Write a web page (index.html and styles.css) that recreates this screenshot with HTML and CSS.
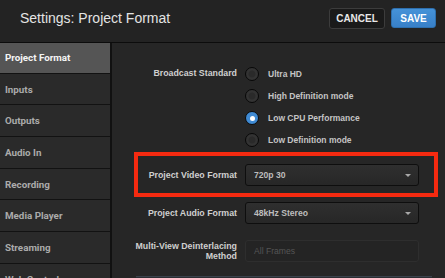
FILE: index.html
```html
<!DOCTYPE html>
<html>
<head>
<meta charset="utf-8">
<link rel="stylesheet" href="styles.css">
</head>
<body>
<div class="app">
  <header class="header">
    <h1 class="title">Settings: Project Format</h1>
    <div class="actions">
      <button class="btn btn-cancel">CANCEL</button>
      <button class="btn btn-save">SAVE</button>
    </div>
  </header>
  <div class="main">
    <nav class="sidebar">
      <div class="nav-item active">Project Format</div>
      <div class="nav-item">Inputs</div>
      <div class="nav-item">Outputs</div>
      <div class="nav-item">Audio In</div>
      <div class="nav-item">Recording</div>
      <div class="nav-item">Media Player</div>
      <div class="nav-item">Streaming</div>
      <div class="nav-item">Web Control</div>
    </nav>
    <section class="content">
      <div class="row row-radios">
        <div class="label">Broadcast Standard</div>
        <div class="radios">
          <div class="radio"><span class="dot"></span><span>Ultra HD</span></div>
          <div class="radio"><span class="dot"></span><span>High Definition mode</span></div>
          <div class="radio"><span class="dot checked"></span><span>Low CPU Performance</span></div>
          <div class="radio"><span class="dot"></span><span>Low Definition mode</span></div>
        </div>
      </div>
      <div class="row row-highlight">
        <div class="label">Project Video Format</div>
        <div class="select"><span>720p 30</span><span class="caret"></span></div>
      </div>
      <div class="row">
        <div class="label">Project Audio Format</div>
        <div class="select"><span>48kHz Stereo</span><span class="caret"></span></div>
      </div>
      <div class="row">
        <div class="label label-two">Multi-View Deinterlacing<br>Method</div>
        <div class="select disabled"><span>All Frames</span></div>
      </div>
      <div class="panel-edge"></div>
    </section>
  </div>
</div>
</body>
</html>
```

FILE: styles.css
```css
* { box-sizing: border-box; }
html, body { margin: 0; padding: 0; }
body {
  width: 445px;
  height: 278px;
  overflow: hidden;
  background: #262626;
  font-family: "Liberation Sans", Arial, sans-serif;
}
.app { display: flex; flex-direction: column; height: 278px; overflow: hidden; }

.header {
  height: 43px;
  flex: none;
  background: #232323;
  border-bottom: 1px solid #0c0c0c;
  display: flex;
  justify-content: space-between;
  align-items: flex-start;
  padding: 8px 9px 0 20px;
}
.title {
  margin: 0;
  font-weight: normal;
  font-size: 14px;
  line-height: 20px;
  color: #e4e4e4;
}
.actions { display: flex; gap: 6px; }
.btn {
  font-family: "Liberation Sans", Arial, sans-serif;
  font-weight: bold;
  font-size: 10px;
  color: #e8e8e8;
  border-radius: 3px;
  padding: 0;
  height: 21px;
  cursor: pointer;
}
.btn-cancel {
  width: 56px;
  background: #1a1a1a;
  border: 1px solid #3c3c3c;
}
.btn-save {
  width: 45px;
  height: 20px;
  background: linear-gradient(#4592d8, #3880c8);
  border: 1px solid #2d6fae;
  color: #fff;
}

.main { display: flex; flex: 1; min-height: 0; overflow: hidden; }
.sidebar {
  width: 112px;
  flex: none;
  background: #2a2a2a;
  border-right: 2px solid #111;
  display: flex;
  flex-direction: column;
  overflow: hidden;
}
.nav-item {
  height: 31.7px;
  flex: none;
  border-bottom: 1px solid #121212;
  font-family: Roboto, "Liberation Sans", sans-serif;
  font-weight: bold;
  font-size: 9.8px;
  color: #ababab;
  display: flex;
  align-items: center;
  padding-left: 5px;
}
.nav-item.active {
  height: 30.7px;
  background: #555;
  color: #f4f4f4;
}

.content {
  flex: 1;
  background: #262626;
  padding-top: 20px;
  display: flex;
  flex-direction: column;
}
.row {
  display: grid;
  grid-template-columns: 125px 174px;
  column-gap: 8px;
  align-items: center;
  position: relative;
  margin-top: 16px;
}
.row-radios { margin-top: 0; align-items: start; }
.row-highlight { margin-top: 13px; }
.row-highlight::after {
  content: "";
  position: absolute;
  left: 22px;
  right: 7px;
  top: -12px;
  bottom: -11px;
  border: 4px solid #f52a10;
  pointer-events: none;
}
.label {
  text-align: right;
  font-weight: bold;
  font-size: 8.8px;
  color: #cfcfcf;
  line-height: 11px;
}
.row-radios .label { padding-top: 5px; }
.label-two { line-height: 10px; }

.radios { display: flex; flex-direction: column; }
.radio {
  height: 22px;
  display: flex;
  align-items: center;
  gap: 9px;
  font-weight: bold;
  font-size: 8.5px;
  color: #c4c4c4;
}
.dot {
  width: 14px;
  height: 14px;
  border-radius: 50%;
  background: radial-gradient(circle, #2a2a2a 0 3px, #333 4px);
  border: 1.5px solid #080808;
  flex: none;
  position: relative;
}
.dot.checked {
  background: #3f8ad3;
  border-color: #0a0a0a;
}
.dot.checked::after {
  content: "";
  position: absolute;
  left: 50%;
  top: 50%;
  width: 5px;
  height: 5px;
  margin: -2.5px 0 0 -2.5px;
  border-radius: 50%;
  background: #fff;
}

.select {
  height: 22px;
  background: linear-gradient(#2f2f2f, #272727);
  border: 1px solid #0e0e0e;
  border-radius: 3px;
  display: flex;
  align-items: center;
  justify-content: space-between;
  padding: 0 7px 0 8px;
  font-weight: bold;
  font-size: 8.6px;
  color: #bdbdbd;
}
.caret {
  width: 0;
  height: 0;
  border-left: 3.5px solid transparent;
  border-right: 3.5px solid transparent;
  border-top: 3.5px solid #a8a8a8;
}
.select.disabled {
  background: #242424;
  border-color: #2e2e2e;
  color: #555;
  font-weight: normal;
}

.panel-edge {
  margin-top: auto;
  margin-left: 24px;
  width: 296px;
  height: 2px;
  border-top: 1px solid #3b424b;
  background: #2a2e33;
}
```
